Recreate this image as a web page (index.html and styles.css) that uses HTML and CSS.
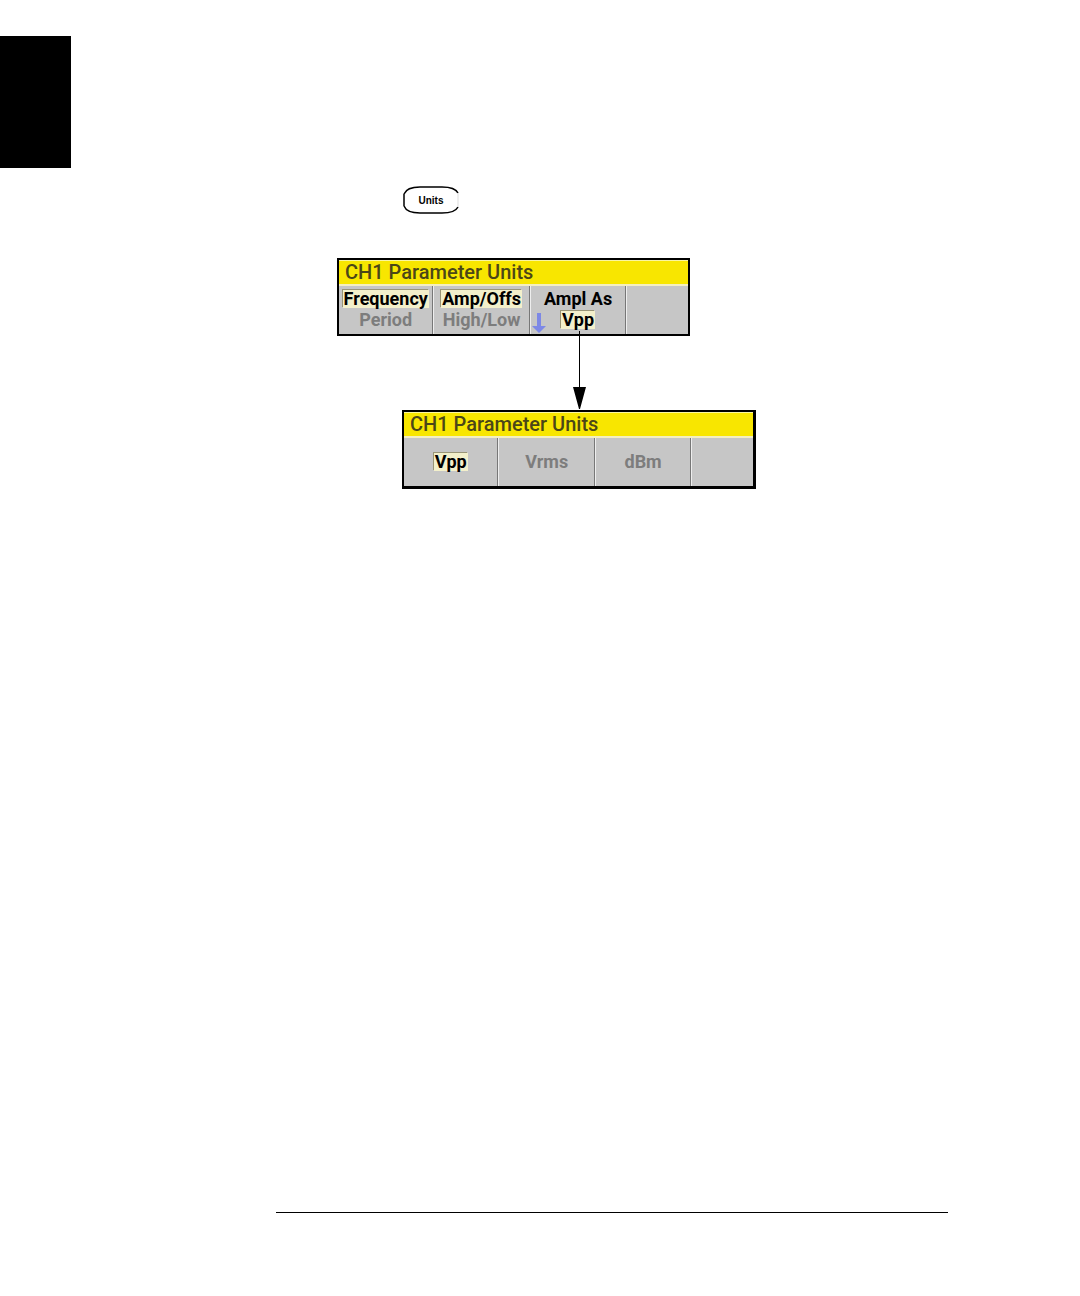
FILE: index.html
```html
<!DOCTYPE html>
<html lang="en">
  <head>
    <meta charset="UTF-8" />
    <meta name="viewport" content="width=device-width, initial-scale=1.0" />
    <title>CH1 Parameter Units</title>
    <link rel="stylesheet" href="styles.css">
  </head>
  <body>
    <div class="chapter-tab"></div>

    <main>
      <button class="key" type="button">
        <svg class="key-outline" viewBox="0 0 56 28" aria-hidden="true">
          <path d="M1 8C3 3 9 1 17 1H39C47 1 53 3 55 7M1 8V20M1 20C3 25 9 27 17 27H39C47 27 53 25 55 21" />
          <path class="thin" d="M55 7V21" />
        </svg>
        <span>Units</span>
      </button>

      <div class="menus">
        <section class="panel">
          <h2>CH1 Parameter Units</h2>
          <div class="softkeys">
            <button type="button">
              <span class="selected">Frequency</span>
              <span class="off">Period</span>
            </button>
            <button type="button">
              <span class="selected">Amp/Offs</span>
              <span class="off">High/Low</span>
            </button>
            <button type="button">
              <span>Ampl As</span>
              <span class="selected">Vpp</span>
              <svg class="more" viewBox="0 0 14 20" aria-hidden="true">
                <path d="M5 0H9V13H14L7 20L0 13H5Z" />
              </svg>
            </button>
            <div class="blank"></div>
          </div>
        </section>

        <svg class="arrow" viewBox="0 0 14 78" aria-hidden="true">
          <path d="M6 0H7V56H13L7 78H6L0 56H6Z" />
        </svg>

        <section class="panel submenu">
          <h2>CH1 Parameter Units</h2>
          <div class="softkeys">
            <button type="button"><span class="selected">Vpp</span></button>
            <button type="button"><span class="off">Vrms</span></button>
            <button type="button"><span class="off">dBm</span></button>
            <div class="blank"></div>
          </div>
        </section>
      </div>
    </main>

    <hr />
  </body>
</html>
```

FILE: styles.css
```css
* {
  box-sizing: border-box;
}

body {
  display: flex;
  flex-direction: column;
  min-height: 100vh;
  margin: 0;
  padding: 36px 0 83px;
  background: white;
  font-family: Roboto, "Liberation Sans", sans-serif;
}

button {
  margin: 0;
  padding: 0;
  border: 0;
  background: none;
  color: black;
  font: inherit;
}

.chapter-tab {
  width: 71px;
  height: 132px;
  background: black;
}

main {
  flex: 1;
  padding: 18px 132px 40px 337px;
}

.key {
  display: grid;
  place-items: center;
  width: 56px;
  height: 28px;
  margin-left: 66px;
  font: bold 10px "Liberation Sans", sans-serif;
}

.key > * {
  grid-area: 1 / 1;
}

.key-outline {
  width: 100%;
  fill: none;
  stroke: black;
  stroke-width: 1.5;
}

.key-outline .thin {
  stroke: #ddd;
  stroke-width: 1;
}

.menus {
  margin-top: 44px;
}

.panel {
  max-width: 353px;
  border: 2px solid black;
  background: #c6c6c6;
}

.submenu {
  max-width: 354px;
  margin-left: 65px;
  border-width: 2px 3px 3px 2px;
}

.panel h2 {
  margin: 0;
  padding-left: 6px;
  border-top: 1px solid #fbf6a0;
  border-bottom: 2px solid #f4efc0;
  background: #f8e600;
  color: #4b4618;
  font-size: 20px;
  font-weight: 500;
  line-height: 23px;
}

.softkeys {
  display: grid;
  grid-template-columns: 95fr 97fr 97fr 62fr;
  height: 48px;
}

.softkeys button {
  position: relative;
  display: flex;
  flex-direction: column;
  align-items: center;
  justify-content: center;
  gap: 3px;
  padding-bottom: 1px;
  border-right: 1px solid #777;
  font-size: 18px;
  font-weight: bold;
  line-height: 18px;
}

.softkeys button + button,
.blank {
  border-left: 1px solid #eee;
}

.selected {
  padding: 0 1px;
  background: #f3f0cb;
  box-shadow: -1px -1px #999577;
}

.off {
  color: #7d7d7d;
}

.more {
  position: absolute;
  bottom: 1px;
  left: 1px;
  width: 14px;
  height: 20px;
  fill: #7d88e6;
}

.arrow {
  display: block;
  width: 14px;
  height: 78px;
  margin: -5px 0 1px 236px;
}

hr {
  height: 1px;
  margin: 0 132px 0 276px;
  border: 0;
  background: black;
}
```
